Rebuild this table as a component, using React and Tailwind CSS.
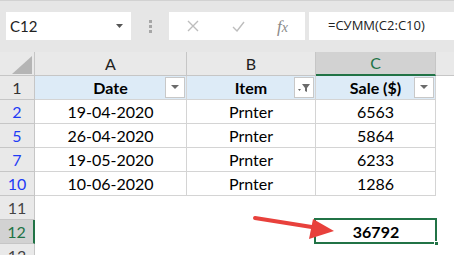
import React from 'react';

const ROWS = [
  { n: '2', date: '19-04-2020', item: 'Prnter', sale: '6563' },
  { n: '5', date: '26-04-2020', item: 'Prnter', sale: '5864' },
  { n: '7', date: '19-05-2020', item: 'Prnter', sale: '6233' },
  { n: '10', date: '10-06-2020', item: 'Prnter', sale: '1286' },
];

const COLS = 'grid grid-cols-[35px_152px_129px_120px_1fr]';
const rowHead = 'flex items-center justify-center bg-[#e9e9e9] border-r border-b border-[#c6c6c6] h-[24px]';
const cell = 'flex items-center justify-center h-[24px] border-r border-b border-[#d4d4d4]';
const blank = 'h-[24px]';

function DropBtn({ filter }) {
  return (
    <div className="absolute right-[1px] top-[1px] w-[20px] h-[21px] bg-white border border-[#c8c8c8] flex items-center justify-center">
      {filter ? (
        <svg width="14" height="10" viewBox="0 0 14 10">
          <path d="M1 6h3l-1.5 2z" fill="#6b6b6b" />
          <path d="M5 1h8l-3 4v4l-2-1v-3z" fill="#6b6b6b" />
        </svg>
      ) : (
        <svg width="8" height="5" viewBox="0 0 8 5">
          <path d="M0 0h8l-4 4z" fill="#6b6b6b" />
        </svg>
      )}
    </div>
  );
}

export default function App() {
  return (
    <div className="w-[454px] h-[255px] overflow-hidden bg-white relative font-['Lato',sans-serif] text-[16px] text-black">
      {/* formula bar */}
      <div className="h-[52px] bg-[#e6e6e6] border-t border-[#d2d2d2] flex items-start pt-[11px]">
        <div className="ml-[6px] w-[125px] h-[28px] bg-white flex items-center justify-between pl-[4px] pr-[8px] text-[15px] text-[#222]">
          <span>C12</span>
          <svg width="7" height="4" viewBox="0 0 7 4">
            <path d="M0 0h7l-3.5 4z" fill="#555" />
          </svg>
        </div>
        <div className="w-[38px] h-[28px] flex items-center justify-center">
          <svg width="3" height="13" viewBox="0 0 3 13">
            <rect x="0" y="0" width="3" height="3" fill="#a6a6a6" />
            <rect x="0" y="5" width="3" height="3" fill="#a6a6a6" />
            <rect x="0" y="10" width="3" height="3" fill="#a6a6a6" />
          </svg>
        </div>
        <div className="w-[136px] h-[28px] bg-white flex items-center">
          <svg className="ml-[18px]" width="12" height="12" viewBox="0 0 12 12">
            <path d="M1 1l10 10M11 1L1 11" stroke="#bdbdbd" strokeWidth="1.4" />
          </svg>
          <svg className="ml-[33px]" width="13" height="11" viewBox="0 0 13 11">
            <path d="M1 6l4 4 7-9" stroke="#bdbdbd" strokeWidth="1.4" fill="none" />
          </svg>
          <span className="ml-[32px] font-['Liberation_Serif',serif] italic text-[17px] text-[#8a8a8a] leading-none">
            f<span className="text-[14px]">x</span>
          </span>
        </div>
        <div className="ml-[4px] flex-1 h-[28px] bg-white flex items-center pl-[19px] font-['Open_Sans',sans-serif] text-[13px] text-[#222]">
          =СУММ(C2:C10)
        </div>
      </div>

      {/* grid */}
      <div className={COLS}>
        {/* column headers */}
        <div className="h-[24px] bg-[#e9e9e9] border-r border-b border-[#c6c6c6] flex items-end justify-end pr-[2px] pb-[1px]">
          <svg width="20" height="18" viewBox="0 0 20 18">
            <path d="M20 0v18H0z" fill="#b5b5b5" />
          </svg>
        </div>
        <div className="h-[24px] bg-[#e9e9e9] border-r border-b border-[#c6c6c6] flex items-center justify-center text-[#222]">A</div>
        <div className="h-[24px] bg-[#e9e9e9] border-r border-b border-[#c6c6c6] flex items-center justify-center text-[#222]">B</div>
        <div className="h-[24px] bg-[#d2d2d2] border-r border-[#c6c6c6] border-b-2 border-b-[#217346] flex items-center justify-center text-[#217346]">C</div>
        <div className="h-[24px] bg-[#e9e9e9] border-b border-[#c6c6c6]" />

        {/* row 1 */}
        <div className={rowHead + ' text-[#333]'}>1</div>
        <div className={cell + ' relative bg-[#ddebf7] font-bold'}>
          Date
          <DropBtn />
        </div>
        <div className={cell + ' relative bg-[#ddebf7] font-bold'}>
          Item
          <DropBtn filter />
        </div>
        <div className={cell + ' relative bg-[#ddebf7] font-bold'}>
          Sale ($)
          <DropBtn />
        </div>
        <div className={blank} />

        {ROWS.map((r) => (
          <React.Fragment key={r.n}>
            <div className={rowHead + ' text-[#1f3cf5]'}>{r.n}</div>
            <div className={cell}>{r.date}</div>
            <div className={cell}>{r.item}</div>
            <div className={cell}>{r.sale}</div>
            <div className={blank} />
          </React.Fragment>
        ))}

        {/* row 11 */}
        <div className={rowHead + ' text-[#444]'}>11</div>
        <div className={blank} />
        <div className={blank} />
        <div className={blank} />
        <div className={blank} />

        {/* row 12 */}
        <div className="flex items-center justify-center bg-[#d2d2d2] border-b border-[#c6c6c6] border-r-2 border-r-[#217346] h-[24px] text-[#217346]">12</div>
        <div className={blank} />
        <div className={blank} />
        <div className="flex items-center justify-center h-[24px] font-bold">36792</div>
        <div className={blank} />

        {/* row 13 */}
        <div className={rowHead + ' text-[#444]'}>13</div>
        <div className={blank} />
        <div className={blank} />
        <div className={blank} />
        <div className={blank} />
      </div>

      {/* selection box */}
      <div className="absolute left-[314px] top-[218px] w-[123px] h-[26px] border-2 border-[#217346] pointer-events-none" />
      <div className="absolute left-[434px] top-[241px] w-[5px] h-[5px] bg-[#217346] border border-white" />

      {/* red arrow */}
      <svg className="absolute left-0 top-0 pointer-events-none" width="454" height="255" viewBox="0 0 454 255">
        <path d="M255 218L318 228" stroke="#e8413c" strokeWidth="4" strokeLinecap="round" />
        <path d="M334 231L313 219L309 239z" fill="#e8413c" />
      </svg>
    </div>
  );
}
